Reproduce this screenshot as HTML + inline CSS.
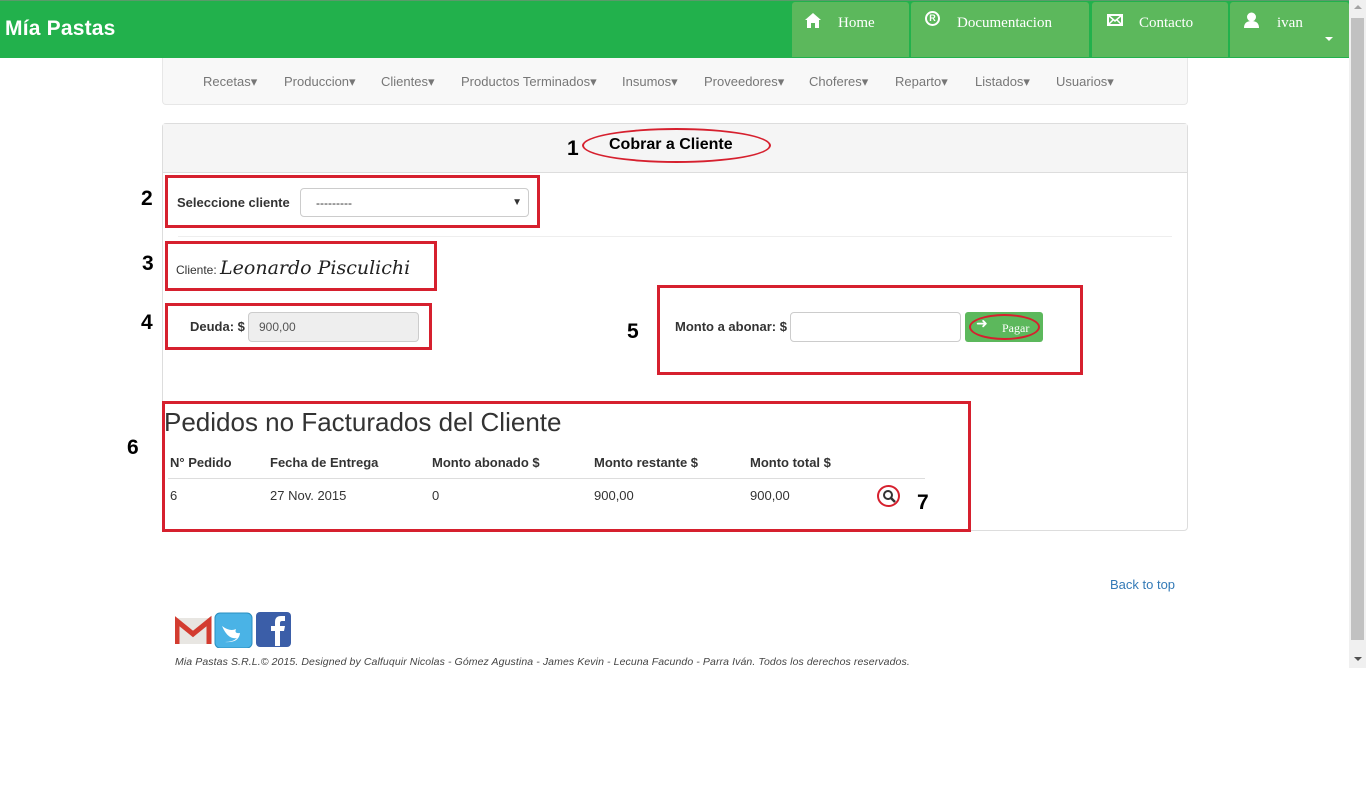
<!DOCTYPE html>
<html><head><meta charset="utf-8"><style>
*{box-sizing:border-box;margin:0;padding:0}
body{width:1366px;height:790px;background:#fff;font-family:"Liberation Sans",sans-serif;font-size:13px;color:#333;position:relative;overflow:hidden}
.a{position:absolute}
.hdr{left:0;top:0;width:1349px;height:58px;background:#22b14c;border-top:1px solid #5a9a6a}
.tab{top:2px;height:55px;background:#5cb85c;border-radius:3px 3px 0 0;color:#fff;font-family:"Liberation Serif",serif;font-size:15px;padding-top:12px}
.nav{left:162px;top:58px;width:1026px;height:47px;background:#f8f8f8;border:1px solid #e7e7e7;border-top:none;border-radius:0 0 4px 4px}
.nav span{position:absolute;top:16px;font-size:13px;color:#777}
.red{border:3px solid #d6202e}
.num{font-weight:bold;font-size:21px;color:#000}
.b{font-weight:bold}
</style></head><body>
<div class="a hdr"></div>
<div class="a" style="left:5px;top:17px;color:#fff;font-weight:bold;font-size:21px;letter-spacing:0.2px">Mía Pastas</div>
<div class="a tab" style="left:792px;width:117px"><svg style="position:absolute;left:13px;top:11px" width="16" height="15" viewBox="0 0 16 15"><path d="M8 0L0 7h2v8h4v-5h4v5h4V7h2z" fill="#fff"/></svg><span style="position:absolute;left:46px;top:13px">Home</span></div>
<div class="a tab" style="left:911px;width:178px"><span style="position:absolute;left:14px;top:9px;width:15px;height:15px;border:2px solid #fff;border-radius:50%;font-size:9px;font-family:'Liberation Sans';font-weight:bold;text-align:center;line-height:11px">R</span><span style="position:absolute;left:46px;top:13px">Documentacion</span></div>
<div class="a tab" style="left:1092px;width:136px"><svg style="position:absolute;left:15px;top:12px" width="16" height="12"><rect x="1" y="1" width="14" height="10" fill="none" stroke="#fff" stroke-width="2"/><path d="M1 1l7 6 7-6M1 11l5-5M15 11l-5-5" stroke="#fff" stroke-width="1.5" fill="none"/></svg><span style="position:absolute;left:47px;top:13px">Contacto</span></div>
<div class="a tab" style="left:1230px;width:119px"><svg style="position:absolute;left:14px;top:10px" width="15" height="16"><circle cx="7.5" cy="5" r="4.5" fill="#fff"/><path d="M0 16q0-7 7.5-7t7.5 7z" fill="#fff"/></svg><span style="position:absolute;left:47px;top:13px">ivan</span><span style="position:absolute;left:95px;top:35px;border:4px solid transparent;border-top-color:#fff"></span></div>
<div class="a" style="left:1349px;top:0;width:17px;height:668px;background:#f0f0f0"><div style="position:absolute;left:2px;top:18px;width:13px;height:622px;background:#c1c1c1"></div><div style="position:absolute;left:5px;top:5px;border:4px solid transparent;border-bottom-color:#a3a3a3;border-top:none"></div><div style="position:absolute;left:5px;top:657px;border:4px solid transparent;border-top-color:#505050;border-bottom:none"></div></div>
<div class="a nav">
<span style="left:40px">Recetas▾</span><span style="left:121px">Produccion▾</span><span style="left:218px">Clientes▾</span><span style="left:298px">Productos Terminados▾</span><span style="left:459px">Insumos▾</span><span style="left:541px">Proveedores▾</span><span style="left:646px">Choferes▾</span><span style="left:732px">Reparto▾</span><span style="left:812px">Listados▾</span><span style="left:893px">Usuarios▾</span>
</div>
<div class="a" style="left:162px;top:123px;width:1026px;height:408px;border:1px solid #ddd;border-radius:4px"></div>
<div class="a" style="left:163px;top:124px;width:1024px;height:49px;background:#f5f5f5;border-bottom:1px solid #ddd"></div>
<div class="a" style="left:609px;top:136px;font-size:16px;font-weight:bold;color:#000">Cobrar a Cliente</div>
<div class="a" style="left:582px;top:128px;width:189px;height:35px;border:2px solid #d6202e;border-radius:50%"></div>
<div class="a num" style="left:567px;top:137px">1</div>
<div class="a num" style="left:141px;top:187px">2</div>
<div class="a red" style="left:165px;top:175px;width:375px;height:53px"></div>
<div class="a b" style="left:177px;top:195px">Seleccione cliente</div>
<div class="a" style="left:300px;top:188px;width:229px;height:29px;border:1px solid #ccc;border-radius:4px;font-size:12px;padding:7px 15px">---------<span style="position:absolute;right:6px;top:8px;font-size:10px">▼</span></div>
<div class="a" style="left:178px;top:236px;width:994px;border-top:1px solid #eee"></div>
<div class="a num" style="left:142px;top:252px">3</div>
<div class="a red" style="left:165px;top:241px;width:272px;height:50px"></div>
<div class="a" style="left:176px;top:257px;font-size:12px;white-space:nowrap">Cliente: <span style="font-family:'DejaVu Serif',serif;font-style:italic;font-size:19px;color:#222">Leonardo Pisculichi</span></div>
<div class="a num" style="left:141px;top:311px">4</div>
<div class="a red" style="left:165px;top:303px;width:267px;height:47px"></div>
<div class="a b" style="left:190px;top:319px">Deuda: $</div>
<div class="a" style="left:248px;top:312px;width:171px;height:30px;background:#eee;border:1px solid #ccc;border-radius:4px;color:#555;padding:7px 10px;font-size:12px">900,00</div>
<div class="a num" style="left:627px;top:320px">5</div>
<div class="a red" style="left:657px;top:285px;width:426px;height:90px"></div>
<div class="a b" style="left:675px;top:319px">Monto a abonar: $</div>
<div class="a" style="left:790px;top:312px;width:171px;height:30px;border:1px solid #ccc;border-radius:4px"></div>
<div class="a" style="left:965px;top:312px;width:78px;height:30px;background:#5cb85c;border-radius:3px;color:#fff;font-family:'Liberation Serif',serif;font-size:12px"><span style="position:absolute;left:11px;top:4px;font-size:14px">➜</span><span style="position:absolute;left:37px;top:9px">Pagar</span><div style="position:absolute;left:4px;top:2px;width:71px;height:26px;border:2px solid #d6202e;border-radius:50%"></div></div>
<div class="a num" style="left:127px;top:436px">6</div>
<div class="a red" style="left:162px;top:401px;width:809px;height:131px"></div>
<div class="a" style="left:164px;top:407px;font-size:26px;color:#333">Pedidos no Facturados del Cliente</div>
<div class="a" style="left:168px;top:478px;width:757px;border-top:1px solid #ddd"></div>
<div class="a b" style="left:170px;top:455px">N° Pedido</div>
<div class="a b" style="left:270px;top:455px">Fecha de Entrega</div>
<div class="a b" style="left:432px;top:455px">Monto abonado $</div>
<div class="a b" style="left:594px;top:455px">Monto restante $</div>
<div class="a b" style="left:750px;top:455px">Monto total $</div>
<div class="a" style="left:170px;top:488px">6</div>
<div class="a" style="left:270px;top:488px">27 Nov. 2015</div>
<div class="a" style="left:432px;top:488px">0</div>
<div class="a" style="left:594px;top:488px">900,00</div>
<div class="a" style="left:750px;top:488px">900,00</div>
<div class="a" style="left:877px;top:485px;width:23px;height:22px;border:2px solid #d6202e;border-radius:50%"><svg style="position:absolute;left:3px;top:2px" width="14" height="14"><circle cx="6" cy="6" r="4" fill="none" stroke="#333" stroke-width="2"/><path d="M9 9l4 4" stroke="#333" stroke-width="2.5"/></svg></div>
<div class="a num" style="left:917px;top:491px">7</div>
<div class="a" style="left:1110px;top:577px;color:#337ab7;font-size:13px">Back to top</div>
<svg class="a" style="left:175px;top:612px" width="116" height="36">
<rect x="0" y="6" width="36" height="26" fill="#e8e6e2"/><path d="M2 32V9l16 13 16-13v23" fill="none" stroke="#d33c30" stroke-width="5"/>
<rect x="40" y="1" width="37" height="35" rx="5" fill="#4ab3e6" stroke="#2a8fc0"/><path d="M47 14q8 6 14 3q-2 5 4 4q-1 10-15 9q8 0 12-4q-9 2-15-12z" fill="#fff"/>
<rect x="81" y="0" width="35" height="35" rx="4" fill="#3b5ea8"/><path d="M100 34V19h-4v-5h4v-4q0-6 6-6h4v5h-3q-2 0-2 2v3h5l-1 5h-4v15z" fill="#fff"/>
</svg>
<div class="a" style="left:175px;top:656px;font-size:10.5px;letter-spacing:0.1px;font-style:italic;color:#444;white-space:nowrap">Mia Pastas S.R.L.© 2015. Designed by Calfuquir Nicolas - Gómez Agustina - James Kevin - Lecuna Facundo - Parra Iván. Todos los derechos reservados.</div>
</body></html>
